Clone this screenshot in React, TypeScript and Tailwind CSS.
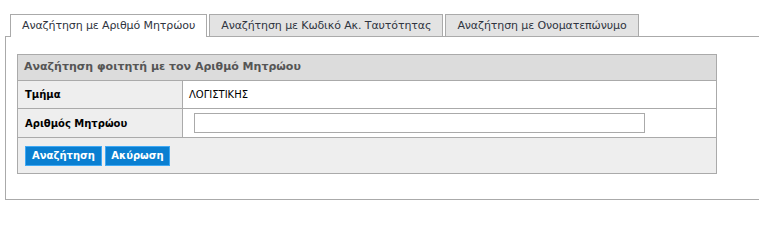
import React from 'react'

const tabs = [
  'Αναζήτηση με Αριθμό Μητρώου',
  'Αναζήτηση με Κωδικό Ακ. Ταυτότητας',
  'Αναζήτηση με Ονοματεπώνυμο',
]

export default function App() {
  return (
    <div className="w-[759px] h-[214px] bg-white pt-[14px] pl-[5px] font-['DejaVu_Sans',Verdana,sans-serif]">
      {/* tab strip */}
      <div className="flex items-end border-b border-[#aaaaaa] pl-[5px] h-[23px]">
        {tabs.map((t, i) => (
          <div
            key={t}
            className={
              i === 0
                ? 'h-[23px] -mb-px mr-[2px] px-[11px] pt-[3px] border border-b-0 border-[#aaaaaa] bg-white text-[11px] text-[#2f3440] tracking-[-0.1px]'
                : 'h-[22px] mr-[2px] px-[11px] pt-[3px] border border-b-0 border-[#aaaaaa] bg-[#e3e3e3] text-[11px] text-[#2f3440] tracking-[-0.1px]'
            }
          >
            {t}
          </div>
        ))}
      </div>

      {/* panel */}
      <div className="border-l border-b border-[#aaaaaa] h-[163px] pl-[11px] pt-[17px]">
        <div className="w-[700px] border border-[#aaaaaa]">
          <div className="h-[26px] bg-[#dcdcdc] border-b border-[#aaaaaa] px-[6px] flex items-center text-[11px] font-bold text-[#555]">
            Αναζήτηση φοιτητή με τον Αριθμό Μητρώου
          </div>
          <div className="flex h-[28px] border-b border-[#aaaaaa]">
            <div className="w-[165px] bg-[#eeeeee] border-r border-[#aaaaaa] px-[7px] flex items-center text-[10px] font-bold text-black">
              Τμήμα
            </div>
            <div className="flex-1 px-[6px] flex items-center text-[10px] text-black">ΛΟΓΙΣΤΙΚΗΣ</div>
          </div>
          <div className="flex h-[29px] border-b border-[#aaaaaa]">
            <div className="w-[165px] bg-[#eeeeee] border-r border-[#aaaaaa] px-[7px] flex items-center text-[10px] font-bold text-black">
              Αριθμός Μητρώου
            </div>
            <div className="flex-1 pl-[11px] flex items-center">
              <input type="text" className="w-[451px] h-[20px] border border-[#aaaaaa] bg-white outline-none" />
            </div>
          </div>
          <div className="h-[35px] bg-[#eeeeee] pl-[7px] flex items-center gap-[3px]">
            <button className="w-[77px] h-[20px] bg-[#0a7fd1] border border-[#3fa9f5] text-white text-[10px] font-bold">
              Αναζήτηση
            </button>
            <button className="w-[65px] h-[20px] bg-[#0a7fd1] border border-[#3fa9f5] text-white text-[10px] font-bold">
              Ακύρωση
            </button>
          </div>
        </div>
      </div>
    </div>
  )
}
